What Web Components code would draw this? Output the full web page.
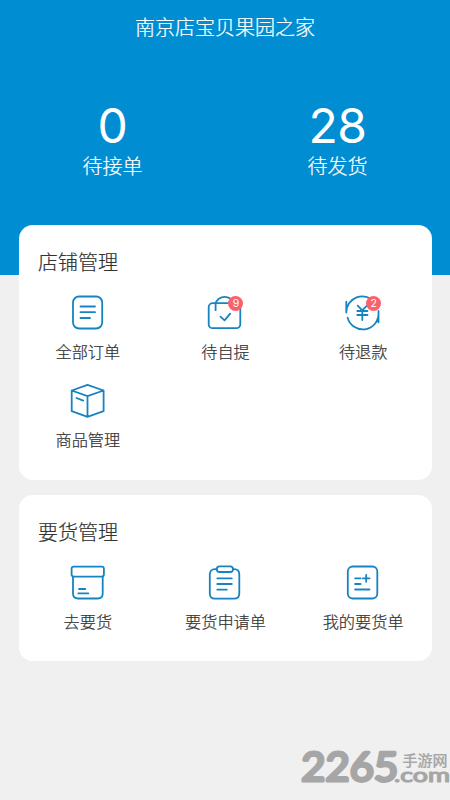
<!DOCTYPE html>
<html lang="zh-CN">
<head>
<meta charset="utf-8">
<title>店铺</title>
<style>
body{margin:0;background:#f0f0f0;color:#333;font-family:"Noto Sans CJK SC",sans-serif;font-weight:300;-webkit-text-stroke:.22px currentColor}
</style>
</head>
<body>
<shop-page>
  <shop-header heading="南京店宝贝果园之家">
    <stat-block value="0" label="待接单"></stat-block>
    <stat-block value="28" label="待发货"></stat-block>
  </shop-header>
  <menu-card heading="店铺管理">
    <menu-item icon="order" label="全部订单"></menu-item>
    <menu-item icon="bag" label="待自提" badge="9"></menu-item>
    <menu-item icon="refund" label="待退款" badge="2"></menu-item>
    <menu-item icon="box" label="商品管理"></menu-item>
  </menu-card>
  <menu-card heading="要货管理" class="last">
    <menu-item icon="archive" label="去要货"></menu-item>
    <menu-item icon="clipboard" label="要货申请单"></menu-item>
    <menu-item icon="list" label="我的要货单"></menu-item>
  </menu-card>
  <site-mark slot="mark"></site-mark>
</shop-page>
<script>
const ICONS = {
  order: '<rect x="5" y="3.5" width="29.2" height="32" rx="6"/><path d="M12.5 13.5H27M12.5 19.2H27M12.5 25H22"/>',
  bag: '<rect x="3.7" y="10.2" width="31.6" height="25" rx="4"/><path d="M10.6 17.2V11C11.3 6.5 15.5 3.8 19.7 3.8S27.5 6.5 28.3 10M15.5 23.7L19.5 27.3L25.2 20.7"/>',
  refund: '<path d="M3.3 8.7V19.5A16 15.8 0 0 1 31.5 9M4.6 24.6A15.7 15.7 0 0 0 35.5 20M35.5 18V29.3M14.7 12.7L19.2 17.3L23.9 12.7M14.3 18H24.5M14.3 22H24.5M19.3 17.5V27"/>',
  box: '<path d="M19.5 3.9L35.6 9.5V30.2L19.5 35.8L3.7 30.2V9.5ZM3.7 9.5L19.5 15.2L35.6 9.5M19.5 15.2V35.5M8.5 17L15.2 19.6"/>',
  archive: '<rect x="3.6" y="3.6" width="32.3" height="10" rx="2"/><path d="M5 13.6V30.5Q5 35.5 10 35.5H29.7Q34.7 35.5 34.7 30.5V13.6M11 26H17.3M10.3 30.4H20.3"/>',
  clipboard: '<path d="M11.5 6.2H10Q4.8 6.2 4.8 11.5V30.5Q4.8 35.7 10 35.7H29Q34.3 35.7 34.3 30.5V11.5Q34.3 6.2 29 6.2H28"/><rect x="11.8" y="3.3" width="16.2" height="5.7" rx="2.8"/><path d="M12.3 15.3H26.8M12.3 21H26.8M12.3 26.7H21.8"/>',
  list: '<rect x="4.8" y="3.5" width="29.5" height="32" rx="5"/><path d="M12.1 15.3H17.6M12.1 21H17.6M12.1 26.5H26.5M19.8 15.3H26.6M23.2 11.8V18.8"/>'
};

class Base extends HTMLElement {
  connectedCallback() {
    if (!this.shadowRoot) this.attachShadow({mode: 'open'}).innerHTML = this.render();
  }
  attr(name) { return this.getAttribute(name) || ''; }
}

customElements.define('shop-page', class extends Base {
  render() {
    return `<style>
      :host{display:flex;flex-direction:column;position:relative;height:800px;overflow:hidden}
      ::slotted(menu-card){margin:-50px 18px 0 19px}
      ::slotted(menu-card.last){margin-top:15px;padding-bottom:25px}
      ::slotted(site-mark){position:absolute;right:0;bottom:10px}
    </style><slot></slot><slot name="mark"></slot>`;
  }
});

customElements.define('shop-header', class extends Base {
  render() {
    return `<style>
      :host{display:block;box-sizing:border-box;height:275px;flex:none;background:#008dd2;color:#fff;padding-top:13px}
      h1{margin:0;font-size:20px;line-height:28px;font-weight:inherit;text-align:center}
      .stats{display:grid;grid-template-columns:1fr 1fr;margin-top:60px}
    </style><h1>${this.attr('heading')}</h1><div class="stats"><slot></slot></div>`;
  }
});

customElements.define('stat-block', class extends Base {
  render() {
    return `<style>
      :host{display:flex;flex-direction:column;align-items:center}
      .value{font:400 48px/50px Inter,sans-serif;letter-spacing:-.5px;-webkit-text-stroke:0}
      .label{font-size:20px;line-height:28px;margin-top:1px}
    </style><span class="value">${this.attr('value')}</span><span class="label">${this.attr('label')}</span>`;
  }
});

customElements.define('menu-card', class extends Base {
  render() {
    return `<style>
      :host{display:block;background:#fff;border-radius:14px;box-sizing:border-box;padding:22px 0 26px;flex:none}
      h2{margin:0 0 16px 19px;font-size:20px;line-height:30px;font-weight:inherit}
      .grid{display:grid;grid-template-columns:repeat(3,1fr);row-gap:15px}
    </style><h2>${this.attr('heading')}</h2><div class="grid"><slot></slot></div>`;
  }
});

customElements.define('menu-item', class extends Base {
  render() {
    const badge = this.attr('badge');
    return `<style>
      :host{display:flex;flex-direction:column;align-items:center}
      .icon{position:relative;width:40px;height:40px}
      svg{display:block;fill:none;stroke:#1684c2;stroke-width:1.8;stroke-linecap:round;stroke-linejoin:round}
      .badge{position:absolute;left:23px;top:3px;width:15px;height:15px;border-radius:50%;background:#f9626b;color:#fff;font:400 10.5px/15px Inter,sans-serif;text-align:center;-webkit-text-stroke:0}
      .label{font-size:16.2px;line-height:24px;margin-top:6px;height:27px;white-space:nowrap}
    </style><div class="icon"><svg width="40" height="40" viewBox="0 0 40 40">${ICONS[this.attr('icon')]}</svg>${badge ? `<span class="badge">${badge}</span>` : ''}</div><span class="label">${this.attr('label')}</span>`;
  }
});

customElements.define('site-mark', class extends Base {
  render() {
    return `<style>
      :host{display:block;width:150px;height:50px;-webkit-text-stroke:0}
      svg{display:block;fill:#a6a6a6;overflow:visible}
      text{stroke:#a6a6a6;stroke-linejoin:round;stroke-linecap:round}
      .num{font:400 40px Lato,sans-serif;stroke-width:3.2px}
      .cn{font:500 14.5px "Noto Sans CJK SC",sans-serif;stroke-width:.2px}
      .com{font:400 20px Lato,sans-serif;stroke-width:1.2px}
    </style><svg width="150" height="50" viewBox="300 740 150 50">
      <text class="num" transform="translate(301 781.2) skewX(-1)" textLength="97" lengthAdjust="spacingAndGlyphs">2265</text>
      <text class="cn" x="402.5" y="765.5" textLength="45" lengthAdjust="spacingAndGlyphs">手游网</text>
      <text class="com" x="394" y="781.5" textLength="56" lengthAdjust="spacingAndGlyphs">.com</text>
    </svg>`;
  }
});
</script>
</body>
</html>
